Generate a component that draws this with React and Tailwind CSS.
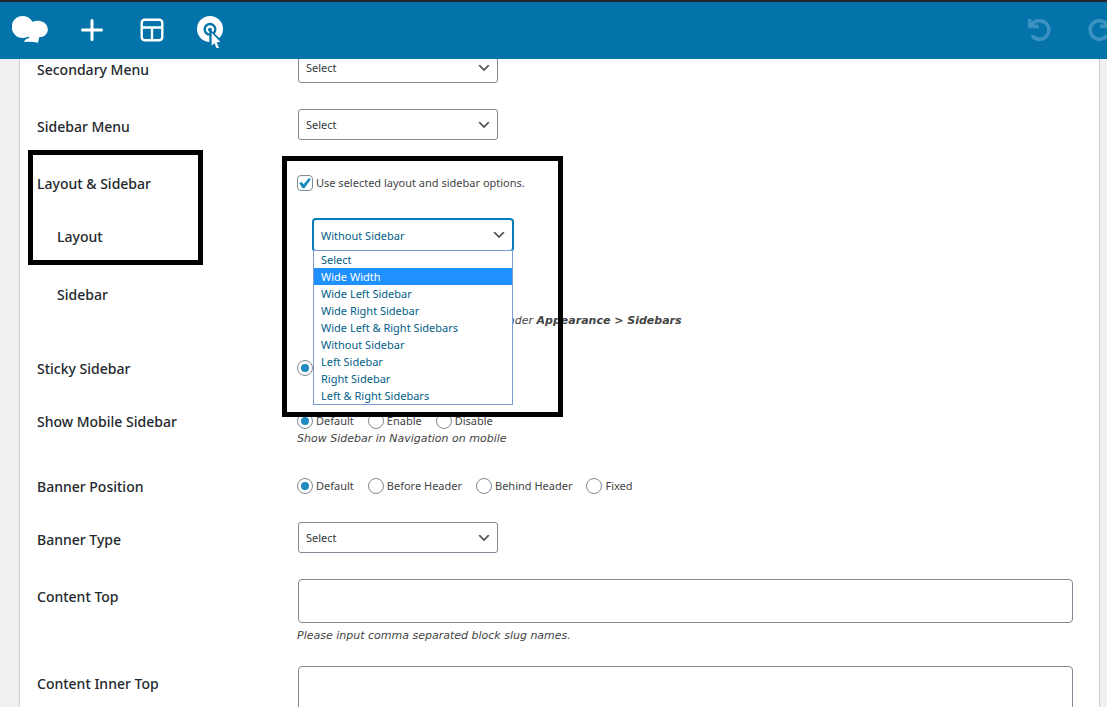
import React, { useState } from 'react';

const layouts = [
  'Select',
  'Wide Width',
  'Wide Left Sidebar',
  'Wide Right Sidebar',
  'Wide Left & Right Sidebars',
  'Without Sidebar',
  'Left Sidebar',
  'Right Sidebar',
  'Left & Right Sidebars',
];

function Row({ label, htmlFor, sub, children }) {
  return (
    <div className="flex py-[13px]">
      <div className={`w-[260px] shrink-0 pt-[9px] text-[14px] leading-[18px] font-medium text-[#23282d] ${sub ? 'pl-5' : ''}`}>
        {htmlFor ? <label htmlFor={htmlFor}>{label}</label> : label}
      </div>
      <div className={`min-w-0 flex-1 ${sub ? 'pl-4' : ''}`}>{children}</div>
    </div>
  );
}

function Select({ id, options = ['Select'], value, onChange, active }) {
  return (
    <div className="relative w-[200px]">
      <select
        id={id}
        value={value}
        onChange={onChange}
        className={`block w-full appearance-none rounded-[3px] border bg-white pl-[7px] pr-6 pt-[2px] text-[11px] outline-none ${active ? 'h-8 border-[#007cba] text-[#016087] shadow-[0_0_0_1px_#007cba]' : 'h-[31px] border-[#7e8993] text-[#32373c]'}`}
      >
        {options.map((o) => <option key={o}>{o}</option>)}
      </select>
      <svg viewBox="0 0 20 20" className="pointer-events-none absolute right-[6px] top-2 h-4 w-4" fill="#555">
        <path d="M5 6l5 5 5-5 2 1-7 7-7-7 2-1z" />
      </svg>
    </div>
  );
}

function Radios({ name, options }) {
  return (
    <div className="flex gap-[14px] pt-[9px]">
      {options.map((o, i) => (
        <label key={o} className="flex h-4 items-center gap-[3px] text-[11px] leading-4">
          <input
            type="radio"
            name={name}
            defaultChecked={i === 0}
            className="grid h-4 w-4 shrink-0 appearance-none place-items-center rounded-full border border-[#7e8993] bg-white before:h-2 before:w-2 before:rounded-full checked:before:bg-[#1e8cbe] checked:before:content-['']"
          />
          {o}
        </label>
      ))}
    </div>
  );
}

function Help({ tight, children }) {
  return (
    <p className={`-mb-[2px] font-['DejaVu_Sans',Verdana,sans-serif] text-[11px] leading-3 italic ${tight ? 'pt-1' : 'pt-[7px]'}`}>
      {children}
    </p>
  );
}

function Undo({ className }) {
  return (
    <svg viewBox="114 57 69 69" className={`h-[23px] w-[23px] ${className}`} fill="none">
      <path d="M127 72a28 28 0 1 1 2 38" stroke="#3a92c1" strokeWidth="11" strokeLinecap="round" />
      <path d="M114 57l10 0 0 14 23 4 0 10-28 0q-5 0-5-5z" fill="#3a92c1" />
    </svg>
  );
}

const headerButton = 'flex h-full w-[60px] shrink-0 items-center justify-center';

function Header() {
  return (
    <header className="fixed inset-x-0 top-0 z-20 flex h-[59px] justify-between overflow-hidden border-t-2 border-[#23282d] bg-[#0473aa] pb-px">
      <div className="flex">
        <a href="#home" aria-label="Home" className="flex h-full w-[62px] items-center pl-3">
          <svg viewBox="36 45 108 87" className="h-[29px] w-9" fill="#fff">
            <circle cx="68" cy="78" r="33" />
            <path d="M93 66c9-9 28-9 38-2 15 10 16 29 5 38-6 5-12 7-18 6l-4 17c-12-3-26-3-42-2 2-6 8-11 17-12l-8-10z" />
          </svg>
        </a>
        <button aria-label="Add element" className={headerButton}>
          <svg viewBox="0 0 22 22" className="h-[22px] w-[22px]" stroke="#fff" strokeWidth="3" strokeLinecap="round">
            <path d="M11 1.5v19M1.5 11h19" />
          </svg>
        </button>
        <button aria-label="Templates" className={headerButton}>
          <svg viewBox="0 0 24 24" className="h-6 w-6" fill="none" stroke="#fff" strokeWidth="2.4">
            <rect x="1.7" y="1.7" width="20.6" height="20.6" rx="3" />
            <path d="M2 9.5h20M12 9.5v12.5" />
          </svg>
        </button>
        <button aria-label="Inspect" className={headerButton}>
          <svg viewBox="588 48 96 96" className="mt-[3px] h-8 w-8">
            <circle cx="630" cy="87" r="39" fill="#fff" />
            <circle cx="630" cy="88" r="16" fill="none" stroke="#0473aa" strokeWidth="7" />
            <circle cx="630" cy="89" r="6" fill="#0473aa" />
            <path d="M628 86l0 56 12-11 7 16 13-5-7-16 17-1z" fill="#0473aa" />
            <path d="M635 98l0 39 8-8 7 17 7-3-7-16 11-1z" fill="#fff" />
          </svg>
        </button>
      </div>
      <div className="-mr-[22px] flex">
        <button aria-label="Undo" className={headerButton}><Undo className="" /></button>
        <button aria-label="Redo" className={headerButton}><Undo className="-scale-x-100" /></button>
      </div>
    </header>
  );
}

export default function App() {
  const [layout, setLayout] = useState('Without Sidebar');
  const [override, setOverride] = useState(true);

  return (
    <div className="h-screen overflow-hidden bg-[#f0f0f0] pl-[19px] pr-[7px] font-['Noto_Sans','Open_Sans',sans-serif] text-[#444]">
      <Header />

      <form className="min-h-full border-x border-[#ccd0d4] bg-white pl-[17px] pr-[26px] pt-[39px]">
        <Row label="Secondary Menu" htmlFor="secondary-menu">
          <div className="pl-px"><Select id="secondary-menu" /></div>
        </Row>
        <Row label="Sidebar Menu" htmlFor="sidebar-menu">
          <div className="pl-px"><Select id="sidebar-menu" /></div>
        </Row>

        {/* LAYOUT & SIDEBAR */}
        <div className="relative">
          <Row label="Layout & Sidebar">
            <label className="flex h-[27px] items-end gap-[3px] pb-[2px] text-[11px] leading-4">
              <span className="relative h-4 w-4">
                <input
                  type="checkbox"
                  checked={override}
                  onChange={(e) => setOverride(e.target.checked)}
                  className="block h-4 w-4 appearance-none rounded border border-[#7e8993] bg-white"
                />
                {override && (
                  <svg viewBox="0 0 20 20" className="pointer-events-none absolute inset-0 h-4 w-4" fill="#1e8cbe">
                    <path d="M14.83 3.9l2.6 1.4-8.2 11.2h-2.4l-4-6.2 2.7-1.9 2.7 3.3z" />
                  </svg>
                )}
              </span>
              Use selected layout and sidebar options.
            </label>
          </Row>

          <Row label="Layout" htmlFor="layout" sub>
            <div className="relative w-[200px]">
              <Select id="layout" options={layouts} value={layout} onChange={(e) => setLayout(e.target.value)} active />
              <ul role="listbox" aria-label="Layout" className="absolute inset-x-0 top-full z-10 -mt-px border border-[#7a9cd3] bg-white text-[11px] leading-[17px] text-[#016087]">
                {layouts.map((o) => (
                  <li
                    key={o}
                    role="option"
                    aria-selected={o === layout}
                    onClick={() => setLayout(o)}
                    className={`cursor-default pl-[7px] ${o === 'Wide Width' ? 'bg-[#1e90ff] text-white' : ''}`}
                  >
                    {o}
                  </li>
                ))}
              </ul>
            </div>
          </Row>

          <Row label="Sidebar" htmlFor="sidebar" sub>
            <Select id="sidebar" />
            <Help><b>Note:</b> You can create the sidebar under <b>Appearance &gt; Sidebars</b></Help>
          </Row>

          <div className="pointer-events-none absolute -left-[9px] -top-[3px] h-[115px] w-[175px] border-[5px] border-black" />
          <div className="pointer-events-none absolute left-[245px] top-[3px] z-10 h-[261px] w-[281px] border-[5px] border-black" />
        </div>

        <Row label="Sticky Sidebar">
          <div className="h-[27px]"><Radios name="sticky" options={['Default', 'Yes', 'No']} /></div>
        </Row>
        <Row label="Show Mobile Sidebar">
          <Radios name="mobile" options={['Default', 'Enable', 'Disable']} />
          <Help tight>Show Sidebar in Navigation on mobile</Help>
        </Row>
        <Row label="Banner Position">
          <div className="h-[27px]"><Radios name="banner" options={['Default', 'Before Header', 'Behind Header', 'Fixed']} /></div>
        </Row>
        <Row label="Banner Type" htmlFor="banner-type">
          <div className="pl-px"><Select id="banner-type" /></div>
        </Row>
        <Row label="Content Top" htmlFor="content-top">
          <div className="pl-px"><textarea id="content-top" className="block h-11 w-full resize-none rounded border border-[#7e8993] bg-white p-2 text-[11px]" /></div>
          <Help>Please input comma separated block slug names.</Help>
        </Row>
        <Row label="Content Inner Top" htmlFor="content-inner-top">
          <div className="pl-px"><textarea id="content-inner-top" className="block h-11 w-full resize-none rounded border border-[#7e8993] bg-white p-2 text-[11px]" /></div>
        </Row>
      </form>
    </div>
  );
}
